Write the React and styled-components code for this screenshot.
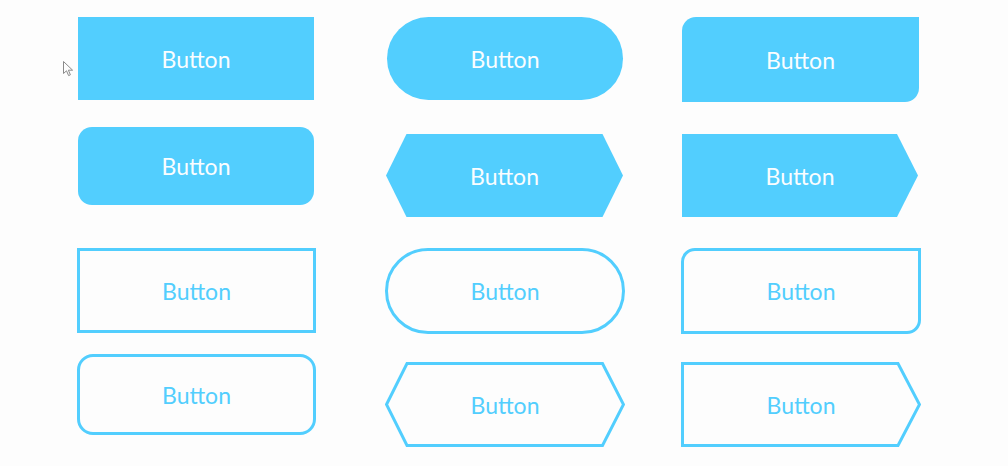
import React from "react";
import styled, { createGlobalStyle, css } from "styled-components";

const BLUE = "#52cefe";

const GlobalStyle = createGlobalStyle`
  body {
    margin: 0;
    background: #fdfdfd;
    font-family: Lato, "Open Sans", sans-serif;
  }
`;

const Page = styled.div`
  position: relative;
  width: 1008px;
  height: 466px;
  display: grid;
  grid-template-columns: 309px 296px 240px;
  padding: 17px 0 0 77px;
  box-sizing: border-box;
`;

const Column = styled.div`
  display: flex;
  flex-direction: column;
  align-items: flex-start;
`;

const shapeBase = css`
  display: flex;
  align-items: center;
  justify-content: center;
  box-sizing: border-box;
  position: relative;
  width: ${(p) => p.$w}px;
  height: ${(p) => p.$h}px;
  margin-top: ${(p) => p.$mt || 0}px;
  margin-left: ${(p) => p.$ml || 0}px;
  font-size: 23px;
  font-family: Lato, sans-serif;
  cursor: pointer;
`;

const Filled = styled.div`
  ${shapeBase};
  background: ${BLUE};
  color: #fafdff;
  border-radius: ${(p) => p.$radius || "0"};
  clip-path: ${(p) => p.$clip || "none"};
`;

const Outlined = styled.div`
  ${shapeBase};
  border: 3px solid ${BLUE};
  color: ${BLUE};
  border-radius: ${(p) => p.$radius || "0"};
`;

const Drawn = styled.div`
  ${shapeBase};
  color: ${BLUE};
`;

const Frame = styled.svg`
  position: absolute;
  inset: 0;
`;

const Label = styled.span`
  position: relative;
`;

const Pointer = styled.svg`
  position: absolute;
  left: 63px;
  top: 61px;
`;

const hexClip =
  "polygon(0 50%, 20.5px 0, calc(100% - 20.5px) 0, 100% 50%, calc(100% - 20.5px) 100%, 20.5px 100%)";
const arrowClip =
  "polygon(0 0, calc(100% - 21px) 0, 100% 50%, calc(100% - 21px) 100%, 0 100%)";

const ShapeButton = ({ w, h, mt, ml, points }) => (
  <Drawn $w={w} $h={h} $mt={mt} $ml={ml}>
    <Frame width={w} height={h} viewBox={`0 0 ${w} ${h}`}>
      <polygon
        points={points}
        fill="none"
        stroke={BLUE}
        strokeWidth="3"
        strokeLinejoin="miter"
      />
    </Frame>
    <Label>Button</Label>
  </Drawn>
);

const App = () => {
  return (
    <Page>
      <GlobalStyle />
      <Column>
        <Filled $w={236} $h={83} $ml={1}>
          <Label>Button</Label>
        </Filled>
        <Filled $w={236} $h={78} $mt={27} $ml={1} $radius="14px">
          <Label>Button</Label>
        </Filled>
        <Outlined $w={239} $h={85} $mt={43}>
          <Label>Button</Label>
        </Outlined>
        <Outlined $w={239} $h={81} $mt={21} $radius="16px">
          <Label>Button</Label>
        </Outlined>
      </Column>
      <Column>
        <Filled $w={236} $h={83} $ml={1} $radius="42px">
          <Label>Button</Label>
        </Filled>
        <Filled $w={237} $h={83} $mt={34} $clip={hexClip}>
          <Label>Button</Label>
        </Filled>
        <Outlined $w={240} $h={86} $mt={31} $ml={-1} $radius="43px">
          <Label>Button</Label>
        </Outlined>
        <ShapeButton
          w={240}
          h={85}
          mt={28}
          ml={-1}
          points="1.5,42.5 22,1.5 217.5,1.5 238.5,42.5 217.5,83.5 22,83.5"
        />
      </Column>
      <Column>
        <Filled $w={237} $h={85} $radius="14px 0 14px 0">
          <Label>Button</Label>
        </Filled>
        <Filled $w={236} $h={83} $mt={32} $clip={arrowClip}>
          <Label>Button</Label>
        </Filled>
        <Outlined $w={240} $h={86} $mt={31} $ml={-1} $radius="14px 0 14px 0">
          <Label>Button</Label>
        </Outlined>
        <ShapeButton
          w={240}
          h={85}
          mt={28}
          ml={-1}
          points="1.5,1.5 217,1.5 238.5,42.5 217,83.5 1.5,83.5"
        />
      </Column>
      <Pointer width="12" height="17" viewBox="0 0 12 17">
        <path
          d="M0.5 0.5 L0.5 12.5 L3.5 9.8 L5.6 14.6 L7.4 13.8 L5.4 9.2 L9.6 9.2 Z"
          fill="#fdfdfd"
          stroke="#8a8a8a"
          strokeWidth="1"
          strokeLinejoin="round"
        />
      </Pointer>
    </Page>
  );
};

export default App;
